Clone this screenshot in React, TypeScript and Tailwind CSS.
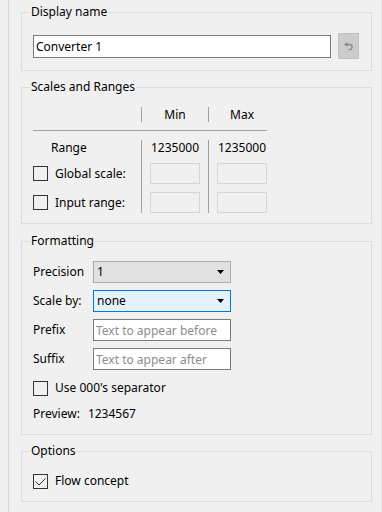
import React from 'react';

interface GroupProps {
  title: string;
  className?: string;
  children: React.ReactNode;
}

const Group: React.FC<GroupProps> = ({ title, className = '', children }) => (
  <fieldset className={`border border-[#dcdcdc] ${className}`}>
    <legend className="ml-[8px] px-[1px] leading-[16px]">{title}</legend>
    {children}
  </fieldset>
);

const CheckBox: React.FC<{ checked?: boolean }> = ({ checked = false }) => (
  <div className="w-[15px] h-[15px] shrink-0 border border-[#333333] bg-[#f0f0f0] flex items-center justify-center">
    {checked && (
      <svg width="13" height="13" viewBox="0 0 13 13" fill="none">
        <path d="M1.5 6.5 L5 10 L11.5 3.5" stroke="#333333" strokeWidth="1" />
      </svg>
    )}
  </div>
);

const ComboBox: React.FC<{ value: string; focused?: boolean }> = ({ value, focused = false }) => (
  <div
    className={`w-[138px] h-[22px] flex items-center justify-between pl-[3px] pr-[6px] border ${
      focused ? 'bg-[#e5f1fb] border-[#0078d7]' : 'bg-[#e1e1e1] border-[#adadad]'
    }`}
  >
    <span>{value}</span>
    <svg width="7" height="4" viewBox="0 0 7 4">
      <polygon points="0,0 7,0 3.5,4" fill="#000000" />
    </svg>
  </div>
);

const App: React.FC = () => {
  return (
    <div className="w-[382px] h-[512px] bg-[#f0f0f0] pl-[8px] font-['Noto_Sans',sans-serif] text-[12px] text-black">
      <div className="h-full border-l border-r border-l-[#d4d4d4] border-r-[#e4e4e4] pl-[12px] pr-[9px] pt-[4px]">
        {/* Display name */}
        <Group title="Display name">
          <div className="mt-[13px] pb-[11px] pl-[11px] pr-[12px] flex items-center gap-[7px] h-[26px] box-content">
            <input
              readOnly
              defaultValue="Converter 1"
              className="flex-1 min-w-0 h-[23px] px-[2px] bg-white border border-[#7a7a7a] outline-none"
            />
            <button className="w-[21px] h-[26px] shrink-0 bg-[#cccccc] border border-[#c2c2c2] flex items-center justify-center">
              <svg width="10" height="9" viewBox="0 0 10 9" fill="none">
                <polygon points="0,2.5 3.5,0 3.5,5" fill="#8a8a8a" />
                <path d="M3 2.5 H5.5 A2.6 2.6 0 0 1 5.5 7.7 H4.5" stroke="#8a8a8a" strokeWidth="1.3" />
              </svg>
            </button>
          </div>
        </Group>

        {/* Scales and Ranges */}
        <Group title="Scales and Ranges" className="mt-[8px]">
          <div className="pl-[11px] pb-[10px]">
            <div className="mt-[12px] h-[15px] flex">
              <div className="w-[108px]" />
              <div className="border-l border-[#a0a0a0] px-[8px]">
                <div className="w-[50px] leading-[15px] text-center">Min</div>
              </div>
              <div className="border-l border-[#a0a0a0] pl-[8px]">
                <div className="w-[50px] leading-[15px] text-center">Max</div>
              </div>
            </div>
            <div className="mt-[8px] w-[234px] h-px bg-[#a0a0a0]" />
            <div className="mt-[9px] flex">
              <div className="w-[108px] flex flex-col">
                <div className="h-[16px] leading-[16px] pl-[18px]">Range</div>
                <div className="mt-[7px] h-[21px] flex items-center gap-[7px]">
                  <CheckBox />
                  <span>Global scale:</span>
                </div>
                <div className="mt-[8px] h-[21px] flex items-center gap-[7px]">
                  <CheckBox />
                  <span>Input range:</span>
                </div>
              </div>
              <div className="border-l border-[#a0a0a0] px-[8px] flex flex-col">
                <div className="w-[50px] h-[16px] leading-[16px] text-center">1235000</div>
                <div className="mt-[7px] w-[50px] h-[21px] border border-[#d5d5d5]" />
                <div className="mt-[8px] w-[50px] h-[21px] border border-[#d5d5d5]" />
              </div>
              <div className="border-l border-[#a0a0a0] pl-[8px] flex flex-col">
                <div className="w-[50px] h-[16px] leading-[16px] text-center">1235000</div>
                <div className="mt-[7px] w-[50px] h-[21px] border border-[#d5d5d5]" />
                <div className="mt-[8px] w-[50px] h-[21px] border border-[#d5d5d5]" />
              </div>
            </div>
          </div>
        </Group>

        {/* Formatting */}
        <Group title="Formatting" className="mt-[9px]">
          <div className="mt-[12px] pl-[11px] pb-[9px] flex flex-col">
            <div className="h-[22px] flex items-center">
              <span className="w-[60px]">Precision</span>
              <ComboBox value="1" />
            </div>
            <div className="mt-[7px] h-[22px] flex items-center">
              <span className="w-[60px]">Scale by:</span>
              <ComboBox value="none" focused />
            </div>
            <div className="mt-[7px] h-[22px] flex items-center">
              <span className="w-[60px]">Prefix</span>
              <input
                readOnly
                placeholder="Text to appear before"
                className="w-[138px] h-[22px] px-[2px] bg-white border border-[#7a7a7a] outline-none placeholder:text-[#8c8c8c]"
              />
            </div>
            <div className="mt-[7px] h-[22px] flex items-center">
              <span className="w-[60px]">Suffix</span>
              <input
                readOnly
                placeholder="Text to appear after"
                className="w-[138px] h-[22px] px-[2px] bg-white border border-[#7a7a7a] outline-none placeholder:text-[#8c8c8c]"
              />
            </div>
            <div className="mt-[7px] h-[22px] flex items-center gap-[7px]">
              <CheckBox />
              <span>Use 000's separator</span>
            </div>
            <div className="mt-[4px] h-[22px] flex items-center gap-[8px]">
              <span>Preview:</span>
              <span>1234567</span>
            </div>
          </div>
        </Group>

        {/* Options */}
        <Group title="Options" className="mt-[8px]">
          <div className="mt-[11px] pl-[11px] pb-[9px]">
            <div className="h-[22px] flex items-center gap-[7px]">
              <CheckBox checked />
              <span>Flow concept</span>
            </div>
          </div>
        </Group>
      </div>
    </div>
  );
};

export default App;
